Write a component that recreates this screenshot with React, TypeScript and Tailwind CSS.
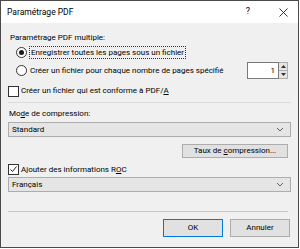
import React from 'react';

const font = { fontFamily: 'Roboto, "Noto Sans", sans-serif' };

const Chevron = () => (
  <svg width="8" height="5" viewBox="0 0 8 5" className="text-[#606060]">
    <path d="M1 1 L4 4 L7 1" fill="none" stroke="currentColor" strokeWidth="1" />
  </svg>
);

const Select = ({ value }: { value: string }) => (
  <div className="h-[15px] border border-[#adadad] bg-[#e5e5e5] flex items-center justify-between pl-[3px] pr-[6px]">
    <span>{value}</span>
    <Chevron />
  </div>
);

const Radio = ({ checked }: { checked?: boolean }) => (
  <span className="w-[11px] h-[11px] rounded-full border border-[#333] bg-white flex items-center justify-center shrink-0">
    {checked && <span className="w-[5px] h-[5px] rounded-full bg-[#1a1a1a]" />}
  </span>
);

const Checkbox = ({ checked }: { checked?: boolean }) => (
  <span className="w-[11px] h-[11px] border border-[#333] bg-white flex items-center justify-center shrink-0">
    {checked && (
      <svg width="9" height="9" viewBox="0 0 9 9">
        <path d="M1.5 4.5 L3.5 6.5 L7.5 1.5" fill="none" stroke="#222" strokeWidth="1" />
      </svg>
    )}
  </span>
);

export default function App() {
  return (
    <div style={font} className="w-[300px] h-[249px] bg-white">
      <div className="w-[299px] h-[248px] border border-[#4a4a4a] bg-[#f0f0f0] flex flex-col text-[8px] text-black">
        {/* barre de titre */}
        <div className="h-[22px] bg-white flex items-center shrink-0">
          <span className="pl-[6px] text-[8.5px]">Paramétrage PDF</span>
          <span className="ml-auto mr-[29px] text-[9px]">?</span>
          <svg width="9" height="9" viewBox="0 0 9 9" className="mr-[10px]">
            <path d="M0.5 0.5 L8.5 8.5 M8.5 0.5 L0.5 8.5" stroke="#222" strokeWidth="0.9" />
          </svg>
        </div>

        <div className="px-[7px] flex flex-col">
          <div className="mt-[8px] h-[14px] flex items-center pl-[2px]">Paramétrage PDF multiple:</div>

          <div className="h-[14px] flex items-center pl-[8px] gap-[2px]">
            <Radio checked />
            <span className="border border-dotted border-[#333] px-[1px] leading-[11px]">
              Enregistrer toutes les pages sous un fichier
            </span>
          </div>

          <div className="mt-[3px] h-[17px] flex items-center pl-[8px] gap-[3px]">
            <Radio />
            <span>Créer un fichier pour chaque nombre de pages spécifié</span>
            <div className="ml-auto mr-[3px] flex h-[17px]">
              <div className="w-[32px] border border-[#7a7a7a] bg-white flex items-center justify-end pr-[3px]">1</div>
              <div className="w-[9px] flex flex-col border border-l-0 border-[#adadad] bg-[#e5e5e5]">
                <div className="flex-1 flex items-center justify-center border-b border-[#adadad]">
                  <svg width="5" height="3" viewBox="0 0 5 3"><path d="M0 3 L2.5 0 L5 3 Z" fill="#333" /></svg>
                </div>
                <div className="flex-1 flex items-center justify-center">
                  <svg width="5" height="3" viewBox="0 0 5 3"><path d="M0 0 L2.5 3 L5 0 Z" fill="#333" /></svg>
                </div>
              </div>
            </div>
          </div>

          <div className="mt-[5px] h-[14px] flex items-center gap-[2px]">
            <Checkbox />
            <span>
              Créer un fichier qui est conforme à PDF/<span className="underline">A</span>
            </span>
          </div>

          <div className="mt-[4px] h-px bg-[#dcdcdc]" />

          <div className="mt-[4px] h-[14px] flex items-center pl-[1px]">
            <span>
              Mo<span className="underline">d</span>e de compression:
            </span>
          </div>
          <div className="mt-[1px]">
            <Select value="Standard" />
          </div>

          <div className="mt-[7px] flex justify-end pr-[3px]">
            <button className="w-[106px] h-[14px] border border-[#adadad] bg-[#e1e1e1] flex items-center justify-center leading-none">
              <span>
                Taux de <span className="underline">c</span>ompression...
              </span>
            </button>
          </div>

          <div className="mt-[5px] h-[13px] flex items-center gap-[2px]">
            <Checkbox checked />
            <span>
              Ajouter des informations R<span className="underline">O</span>C
            </span>
          </div>
          <div className="mt-[1px]">
            <Select value="Français" />
          </div>

          <div className="mt-[19px] h-px bg-[#c8c8c8] mr-[3px]" />

          <div className="mt-[7px] flex justify-end gap-[7px] pr-[1px]">
            <button className="w-[60px] h-[18px] border border-[#0078d7] bg-[#e1e1e1] flex items-center justify-center">
              OK
            </button>
            <button className="w-[60px] h-[18px] border border-[#adadad] bg-[#e1e1e1] flex items-center justify-center">
              Annuler
            </button>
          </div>
        </div>
      </div>
    </div>
  );
}
